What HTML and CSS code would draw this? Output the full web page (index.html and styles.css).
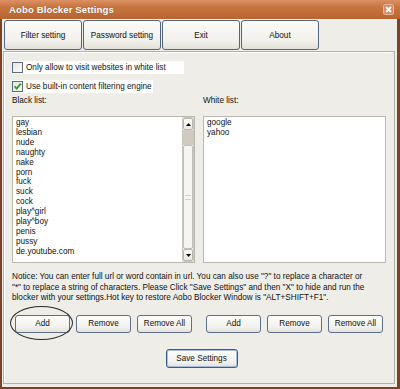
FILE: index.html
```html
<!DOCTYPE html>
<html>
<head>
<meta charset="utf-8">
<link rel="stylesheet" href="styles.css">
</head>
<body>
<div class="window">
  <div class="titlebar">
    <span class="title">Aobo Blocker Settings</span>
    <span class="close"><svg width="7" height="7" viewBox="0 0 7 7"><path d="M1 1 L6 6 M6 1 L1 6" stroke="#fff" stroke-width="1.8"/></svg></span>
  </div>
  <div class="frame">
    <div class="tabs">
      <div class="tab">Filter setting</div>
      <div class="tab">Password setting</div>
      <div class="tab">Exit</div>
      <div class="tab">About</div>
    </div>
    <div class="panel">
      <div class="check check-wide"><span class="box"></span><span>Only allow to visit websites in white list</span></div>
      <div class="check"><span class="box"><svg width="9" height="9" viewBox="0 0 9 9"><path d="M1.5 4.2 L3.6 6.6 L7.8 1.6" fill="none" stroke="#21a121" stroke-width="1.7"/></svg></span><span>Use built-in content filtering engine</span></div>
      <div class="lists">
        <div class="col">
          <div class="list-label">Black list:</div>
          <div class="listbox">
            <div class="items">
              <div>gay</div><div>lesbian</div><div>nude</div><div>naughty</div><div>nake</div><div>porn</div><div>fuck</div><div>suck</div><div>cock</div><div>play^girl</div><div>play^boy</div><div>penis</div><div>pussy</div><div>de.youtube.com</div>
            </div>
            <div class="scrollbar">
              <div class="sb-btn"><svg width="5" height="3" viewBox="0 0 5 3"><path d="M0 3 L2.5 0 L5 3Z" fill="#000"/></svg></div>
              <div class="sb-track"></div>
              <div class="sb-thumb"><span class="grip"></span></div>
              <div class="sb-btn"><svg width="5" height="3" viewBox="0 0 5 3"><path d="M0 0 L2.5 3 L5 0Z" fill="#000"/></svg></div>
            </div>
          </div>
        </div>
        <div class="col">
          <div class="list-label">White list:</div>
          <div class="listbox">
            <div class="items">
              <div>google</div><div>yahoo</div>
            </div>
          </div>
        </div>
      </div>
      <p class="notice">Notice: You can enter full url or word contain in url. You can also use "?" to replace a character or<br>"*" to replace a string of characters. Please Click "Save Settings" and then "X" to hide and run the<br>blocker with your settings.Hot key to restore Aobo Blocker Window is "ALT+SHIFT+F1".</p>
      <div class="btnrow">
        <div class="group">
          <div class="btn-wrap"><div class="btn">Add</div><span class="ellipse"></span></div>
          <div class="btn">Remove</div>
          <div class="btn">Remove All</div>
        </div>
        <div class="group">
          <div class="btn">Add</div>
          <div class="btn">Remove</div>
          <div class="btn">Remove All</div>
        </div>
      </div>
      <div class="saverow"><div class="btn save">Save Settings</div></div>
    </div>
  </div>
</div>
</body>
</html>
```
FILE: styles.css
```css
* { box-sizing: border-box; }
html, body { margin: 0; padding: 0; }
body {
  width: 400px;
  height: 389px;
  overflow: hidden;
  font-family: "Liberation Sans", Arial, sans-serif;
  font-size: 8.2px;
  color: #111;
  background: #fff;
}
.window {
  width: 400px;
  height: 389px;
  display: flex;
  flex-direction: column;
  background: #7a4226;
}
.titlebar {
  height: 19px;
  flex: none;
  display: flex;
  align-items: center;
  justify-content: space-between;
  padding: 0 6px 0 9px;
  background: linear-gradient(#dc9164, #c8763f 35%, #b8642f 100%);
  color: #fff;
  font-weight: bold;
  font-size: 9.6px;
  letter-spacing: 0.1px;
}
.title { text-shadow: 0 0 1px rgba(90,40,10,0.5); }
.close {
  width: 11px;
  height: 11px;
  display: flex;
  align-items: center;
  justify-content: center;
  background: #d9895e;
  border: 1px solid #eab595;
  border-radius: 2px;
}
.frame {
  flex: 1;
  margin: 0 3px 2px 2px;
  background: #efede8;
  padding: 1px 0 3px 0;
  display: flex;
  flex-direction: column;
}
.tabs {
  display: flex;
  gap: 1px;
  margin-left: 2px;
  height: 30px;
  flex: none;
}
.tab {
  width: 78px;
  display: flex;
  align-items: center;
  justify-content: center;
  border: 1px solid #52647f;
  border-radius: 3px;
  background: linear-gradient(#fbfbf8, #f1f0eb 70%, #e3e1d9);
}
.panel {
  flex: 1;
  margin: 1px 2px 0 1px;
  border: 1px solid #b3b0a8;
  box-shadow: inset 1px 1px 0 #fff;
  padding: 9px 8px 0 8px;
  display: flex;
  flex-direction: column;
}
.check {
  height: 13px;
  display: flex;
  align-items: center;
  gap: 3px;
  background: #fff;
  align-self: flex-start;
  padding-right: 1px;
}
.check-wide { width: 172px; }
.check + .check { margin-top: 6px; }
.box {
  width: 11px;
  height: 11px;
  border: 1px solid #5d6b7c;
  background: linear-gradient(135deg, #e6e5df, #fbfbf9);
  display: flex;
  align-items: center;
  justify-content: center;
}
.lists {
  display: grid;
  grid-template-columns: 183px 183px;
  gap: 8px;
  margin-top: 2px;
}
.list-label {
  line-height: 12px;
  height: 12px;
  margin-bottom: 9px;
}
.listbox {
  height: 147px;
  background: #fff;
  border: 1px solid #bcb8b0;
  display: flex;
}
.items {
  flex: 1;
  padding: 1px 0 0 3px;
  line-height: 9.9px;
}
.scrollbar {
  width: 12px;
  margin: 0 0 0 0;
  display: flex;
  flex-direction: column;
  border: 1px solid #c9c6be;
  border-radius: 2px;
  background: #f7f6f2;
}
.sb-btn {
  height: 12px;
  flex: none;
  display: flex;
  align-items: center;
  justify-content: center;
  background: linear-gradient(#fdfdfb, #e9e7e0);
  border: 1px solid #b9b6ad;
  border-radius: 2px;
}
.sb-track { height: 15px; background: #cfcbc3; flex: none; }
.sb-thumb {
  flex: 1;
  background: #f6f5f1;
  border: 1px solid #c4c1b8;
  border-radius: 2px;
  display: flex;
  align-items: center;
  justify-content: center;
}
.grip {
  width: 6px;
  height: 5px;
  border-top: 1px solid #d4d1c9;
  border-bottom: 1px solid #d4d1c9;
  position: relative;
}
.notice {
  margin: 9px 0 0 0;
  line-height: 10.5px;
  white-space: nowrap;
}
.btnrow {
  display: grid;
  grid-template-columns: 183px 183px;
  gap: 8px;
  margin-top: 11px;
}
.group {
  display: flex;
  justify-content: space-between;
  padding: 0 3px;
}
.btn {
  width: 55px;
  height: 18px;
  display: flex;
  align-items: center;
  justify-content: center;
  border: 1px solid #5d6f8c;
  border-radius: 3px;
  background: linear-gradient(#fdfdfb, #f2f1ec 70%, #e2e0d8);
}
.btn-wrap { position: relative; }
.ellipse {
  position: absolute;
  left: -5px;
  top: -9px;
  width: 63px;
  height: 34px;
  border: 1px solid #2b2b2b;
  border-radius: 50%;
  pointer-events: none;
}
.saverow {
  display: flex;
  justify-content: center;
  margin-top: 16px;
  padding-left: 5px;
}
.save {
  width: 72px;
  height: 19px;
  border: 1px solid #3c5a8a;
  box-shadow: inset 0 0 0 1px #a9bbdc;
}
```
